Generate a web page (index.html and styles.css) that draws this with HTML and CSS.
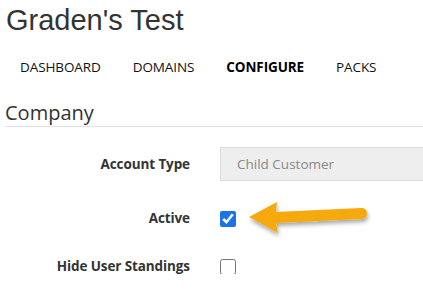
FILE: index.html
```html
<!DOCTYPE html>
<html lang="en">

<head>
  <meta charset="UTF-8" />
  <meta name="viewport" content="width=device-width, initial-scale=1.0" />
  <link rel="stylesheet" href="styles.css">
  <title>Graden's Test</title>
</head>

<body>
  <h1 class="page-title">Graden's Test</h1>

  <nav class="tabs">
    <a class="tab" href="#">DASHBOARD</a>
    <a class="tab" href="#">DOMAINS</a>
    <a class="tab active" href="#">CONFIGURE</a>
    <a class="tab" href="#">PACKS</a>
  </nav>

  <h2 class="section-title">Company</h2>

  <form class="settings">
    <div class="row">
      <label class="label">Account Type</label>
      <input class="field" type="text" placeholder="Child Customer" disabled>
    </div>
    <div class="row row-check">
      <label class="label">Active</label>
      <div class="check-wrap">
        <input class="check" type="checkbox" checked>
        <svg class="arrow" width="130" height="44" viewBox="0 0 130 44">
          <defs>
            <filter id="shadow" x="-10%" y="-30%" width="120%" height="170%">
              <feDropShadow dx="1" dy="3" stdDeviation="2" flood-color="#000" flood-opacity="0.35" />
            </filter>
          </defs>
          <g filter="url(#shadow)">
            <path fill="#f6a90e"
              d="M4 20 L32 5 L31 15 L116 11 Q122 11 122 16.5 Q122 22 116 22 L31 26 L33 36 Z" />
          </g>
        </svg>
      </div>
    </div>
    <div class="row row-check">
      <label class="label">Hide User Standings</label>
      <div class="check-wrap">
        <input class="check" type="checkbox">
      </div>
    </div>
  </form>
</body>

</html>
```

FILE: styles.css
```css
*,
*::after,
*::before {
  box-sizing: border-box;
}

body {
  margin: 0;
  padding: 0 0 0 5px;
  background-color: white;
  color: #333;
  font-family: "Open Sans", "Noto Sans", sans-serif;
  overflow: hidden;
}

.page-title {
  margin: 3px 0 0 1px;
  font-family: "Liberation Sans", Arial, sans-serif;
  font-weight: normal;
  font-size: 29px;
  line-height: 34px;
  color: #333;
}

.tabs {
  display: flex;
  margin-top: 21px;
  padding-left: 15px;
  gap: 32px;
}

.tab {
  font-size: 13.5px;
  line-height: 18px;
  color: #111;
  text-decoration: none;
  letter-spacing: -0.1px;
}

.tab.active {
  font-weight: bold;
  color: #000;
}

.section-title {
  margin: 24px 0 0;
  padding-bottom: 0;
  font-weight: normal;
  font-size: 20px;
  line-height: 26px;
  color: #333;
  border-bottom: 1px solid #e2e2e2;
}

.settings {
  margin-top: 19px;
  display: flex;
  flex-direction: column;
}

.row {
  display: grid;
  grid-template-columns: 185px 1fr;
  gap: 30px;
  align-items: center;
  height: 35px;
}

.row-check {
  margin-top: 28px;
  height: 17px;
}

.row-check+.row-check {
  margin-top: 31px;
}

.label {
  text-align: right;
  font-weight: bold;
  font-size: 13.5px;
  letter-spacing: -0.1px;
  color: #333;
}

.field {
  width: calc(100% + 20px);
  height: 34px;
  padding: 0 16px;
  font-family: inherit;
  font-size: 13.5px;
  background-color: #eee;
  border: 1px solid #ddd;
  border-radius: 0;
}

.field::placeholder {
  color: #888;
}

.check-wrap {
  position: relative;
  height: 17px;
}

.check {
  width: 16px;
  height: 16px;
  margin: 0;
  accent-color: #1a73e8;
}

.arrow {
  position: absolute;
  left: 25px;
  top: -13px;
}
```
